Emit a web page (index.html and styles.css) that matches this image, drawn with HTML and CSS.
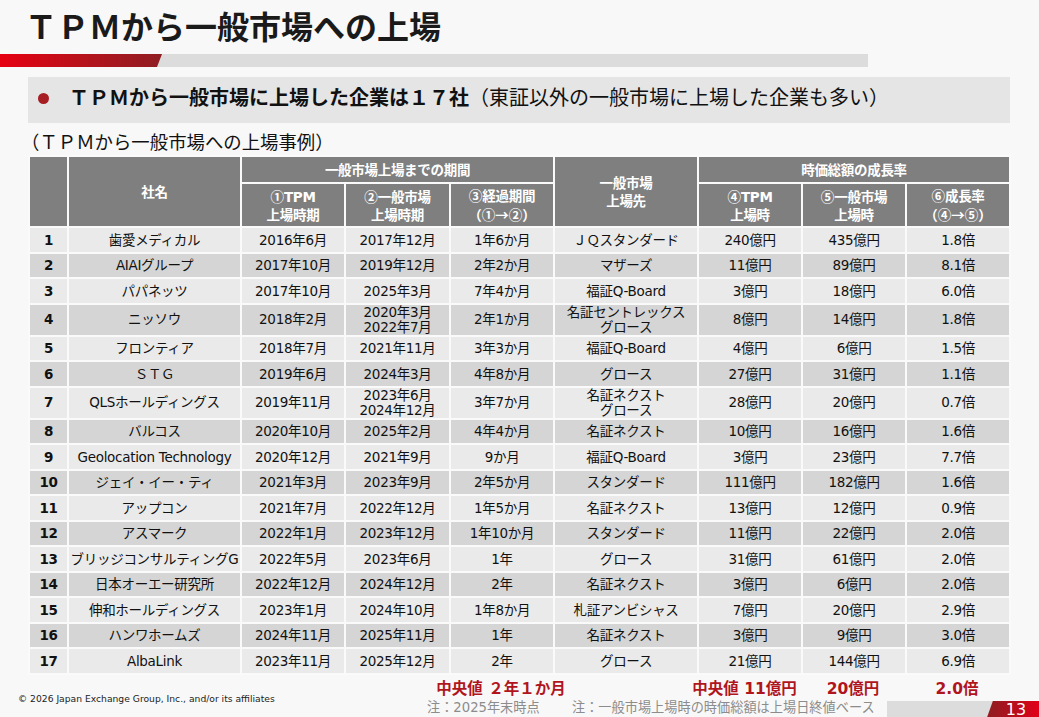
FILE: index.html
```html
<!DOCTYPE html>
<html lang="ja">
<head>
<meta charset="utf-8">
<title>ＴＰＭから一般市場への上場</title>
<link rel="stylesheet" href="styles.css">
</head>
<body>
<div class="slide">
  <h1 class="title">ＴＰＭから一般市場への上場</h1>
  <div class="rule"><div class="rule-red"></div></div>
  <div class="lead"><span class="dot"></span><span class="lead-bold">ＴＰＭから一般市場に上場した企業は１７社</span><span class="lead-normal">（東証以外の一般市場に上場した企業も多い）</span></div>
  <div class="caption">（ＴＰＭから一般市場への上場事例）</div>
  <table class="tbl">
    <colgroup>
      <col class="c-no"><col class="c-name"><col class="c-d"><col class="c-d2"><col class="c-d"><col class="c-mkt"><col class="c-d"><col class="c-d"><col class="c-d">
    </colgroup>
    <thead>
      <tr class="h1"><th rowspan="2"></th><th rowspan="2">社名</th><th colspan="3">一般市場上場までの期間</th><th rowspan="2">一般市場<br>上場先</th><th colspan="3">時価総額の成長率</th></tr>
      <tr class="h2"><th><span class="cj">①</span>TPM<br>上場時期</th><th><span class="cj">②</span>一般市場<br>上場時期</th><th><span class="cj">③</span>経過期間<br><span class="cj">（①→②）</span></th><th><span class="cj">④</span>TPM<br>上場時</th><th><span class="cj">⑤</span>一般市場<br>上場時</th><th><span class="cj">⑥</span>成長率<br><span class="cj">（④→⑤）</span></th></tr>
    </thead>
    <tbody>
      <tr><td class="no">1</td><td>歯愛メディカル</td><td>2016年6月</td><td>2017年12月</td><td>1年6か月</td><td>ＪＱスタンダード</td><td>240億円</td><td>435億円</td><td>1.8倍</td></tr>
      <tr><td class="no">2</td><td>AIAIグループ</td><td>2017年10月</td><td>2019年12月</td><td>2年2か月</td><td>マザーズ</td><td>11億円</td><td>89億円</td><td>8.1倍</td></tr>
      <tr><td class="no">3</td><td>パパネッツ</td><td>2017年10月</td><td>2025年3月</td><td>7年4か月</td><td>福証Q-Board</td><td>3億円</td><td>18億円</td><td>6.0倍</td></tr>
      <tr class="tall"><td class="no">4</td><td>ニッソウ</td><td>2018年2月</td><td>2020年3月<br>2022年7月</td><td>2年1か月</td><td>名証セントレックス<br>グロース</td><td>8億円</td><td>14億円</td><td>1.8倍</td></tr>
      <tr><td class="no">5</td><td>フロンティア</td><td>2018年7月</td><td>2021年11月</td><td>3年3か月</td><td>福証Q-Board</td><td>4億円</td><td>6億円</td><td>1.5倍</td></tr>
      <tr><td class="no">6</td><td>ＳＴＧ</td><td>2019年6月</td><td>2024年3月</td><td>4年8か月</td><td>グロース</td><td>27億円</td><td>31億円</td><td>1.1倍</td></tr>
      <tr class="tall"><td class="no">7</td><td>QLSホールディングス</td><td>2019年11月</td><td>2023年6月<br>2024年12月</td><td>3年7か月</td><td>名証ネクスト<br>グロース</td><td>28億円</td><td>20億円</td><td>0.7倍</td></tr>
      <tr><td class="no">8</td><td>バルコス</td><td>2020年10月</td><td>2025年2月</td><td>4年4か月</td><td>名証ネクスト</td><td>10億円</td><td>16億円</td><td>1.6倍</td></tr>
      <tr><td class="no">9</td><td>Geolocation Technology</td><td>2020年12月</td><td>2021年9月</td><td>9か月</td><td>福証Q-Board</td><td>3億円</td><td>23億円</td><td>7.7倍</td></tr>
      <tr><td class="no">10</td><td>ジェイ・イー・ティ</td><td>2021年3月</td><td>2023年9月</td><td>2年5か月</td><td>スタンダード</td><td>111億円</td><td>182億円</td><td>1.6倍</td></tr>
      <tr><td class="no">11</td><td>アップコン</td><td>2021年7月</td><td>2022年12月</td><td>1年5か月</td><td>名証ネクスト</td><td>13億円</td><td>12億円</td><td>0.9倍</td></tr>
      <tr><td class="no">12</td><td>アスマーク</td><td>2022年1月</td><td>2023年12月</td><td>1年10か月</td><td>スタンダード</td><td>11億円</td><td>22億円</td><td>2.0倍</td></tr>
      <tr><td class="no">13</td><td>ブリッジコンサルティングG</td><td>2022年5月</td><td>2023年6月</td><td>1年</td><td>グロース</td><td>31億円</td><td>61億円</td><td>2.0倍</td></tr>
      <tr><td class="no">14</td><td>日本オーエー研究所</td><td>2022年12月</td><td>2024年12月</td><td>2年</td><td>名証ネクスト</td><td>3億円</td><td>6億円</td><td>2.0倍</td></tr>
      <tr><td class="no">15</td><td>伸和ホールディングス</td><td>2023年1月</td><td>2024年10月</td><td>1年8か月</td><td>札証アンビシャス</td><td>7億円</td><td>20億円</td><td>2.9倍</td></tr>
      <tr><td class="no">16</td><td>ハンワホームズ</td><td>2024年11月</td><td>2025年11月</td><td>1年</td><td>名証ネクスト</td><td>3億円</td><td>9億円</td><td>3.0倍</td></tr>
      <tr><td class="no">17</td><td>AlbaLink</td><td>2023年11月</td><td>2025年12月</td><td>2年</td><td>グロース</td><td>21億円</td><td>144億円</td><td>6.9倍</td></tr>
    </tbody>
  </table>
  <div class="foot">
    <div class="copy">© 2026 Japan Exchange Group, Inc., and/or its affiliates</div>
    <div class="sum">
      <span class="s-period">中央値 ２年１か月</span>
      <span class="s-tpm">中央値 11億円</span>
      <span class="s-mkt">20億円</span>
      <span class="s-rate">2.0倍</span>
    </div>
    <div class="note note1">注：2025年末時点</div>
    <div class="note note2">注：一般市場上場時の時価総額は上場日終値ベース</div>
    <div class="pager"><div class="pager-slant"></div><div class="pager-num">13</div></div>
  </div>
</div>
</body>
</html>
```

FILE: styles.css
```css
html, body {
  margin: 0;
  padding: 0;
}
body {
  width: 1039px;
  height: 717px;
  overflow: hidden;
  background: #f8f8f8;
  color: #111;
  font-family: "DejaVu Sans", "Noto Sans CJK JP", sans-serif;
}
.slide {
  display: flex;
  flex-direction: column;
  height: 717px;
}
.cj {
  font-family: "Noto Sans CJK JP", sans-serif;
  letter-spacing: 0;
}
.title {
  margin: 0 0 10px 25px;
  padding-top: 6px;
  height: 38px;
  font-family: "Noto Sans CJK JP", sans-serif;
  font-size: 32px;
  line-height: 38px;
  font-weight: 700;
  color: #1a1a1a;
}
.rule {
  flex: none;
  width: 868px;
  height: 13px;
  background: #dcdcdc;
}
.rule-red {
  width: 162px;
  height: 100%;
  background: linear-gradient(90deg, #e60012 0%, #b3141c 55%, #8f1d23 100%);
  clip-path: polygon(0 0, 100% 0, calc(100% - 5px) 100%, 0 100%);
}
.lead {
  flex: none;
  margin: 10px 0 0 28px;
  width: 982px;
  height: 46px;
  box-sizing: border-box;
  padding: 0 0 6px 10px;
  background: #e5e5e5;
  display: flex;
  align-items: center;
  font-family: "Noto Sans CJK JP", sans-serif;
  font-size: 20px;
  line-height: 26px;
  color: #111;
  white-space: nowrap;
}
.dot {
  flex: none;
  width: 11px;
  height: 11px;
  border-radius: 50%;
  background: #a61d23;
  margin: 2px 20px 0 0;
}
.lead-bold {
  font-weight: 700;
}
.lead-normal {
  font-weight: 400;
}
.caption {
  flex: none;
  margin: 6px 0 0 21px;
  height: 24px;
  font-family: "Noto Sans CJK JP", sans-serif;
  font-size: 18.4px;
  line-height: 24px;
  color: #111;
}
.tbl {
  flex: none;
  margin: 2px 0 0 28px;
  width: 981px;
  table-layout: fixed;
  border-collapse: collapse;
  font-size: 13.5px;
  letter-spacing: -0.3px;
}
.c-no { width: 39px; }
.c-name { width: 173px; }
.c-d { width: 104px; }
.c-d2 { width: 105px; }
.c-mkt { width: 144px; }
.tbl th,
.tbl td {
  border: 2px solid #fafafa;
  padding: 0;
  text-align: center;
  vertical-align: middle;
  white-space: nowrap;
}
.tbl th {
  background: #7f7f7f;
  color: #fff;
  font-weight: 700;
  line-height: 18px;
}
.tbl tr.h1 { height: 27px; }
.tbl tr.h2 { height: 44px; }
.tbl tbody tr { height: 25.5px; }
.tbl tbody tr.tall { height: 32px; }
.tbl td {
  line-height: 16px;
  color: #111;
}
.tbl tr.tall td {
  line-height: 15px;
}
.tbl tbody tr:nth-child(odd) td { background: #eaeaea; }
.tbl tbody tr:nth-child(even) td { background: #d5d5d5; }
.tbl td.no {
  font-weight: 700;
}
.foot {
  flex: none;
  margin-top: 4px;
  display: grid;
  grid-template-columns: 427px 145px 315px 152px;
  grid-template-rows: 20px 19px;
}
.copy {
  grid-column: 1;
  grid-row: 1 / 3;
  align-self: center;
  padding-left: 18px;
  font-size: 9.2px;
  color: #222;
  white-space: nowrap;
}
.sum {
  grid-column: 2 / 5;
  grid-row: 1;
  display: grid;
  grid-template-columns: 22px 104px 144px 104px 104px 104px 30px;
  align-items: center;
  color: #b0151d;
  font-weight: 700;
  font-size: 15.5px;
  line-height: 20px;
}
.sum span {
  display: flex;
  justify-content: center;
  white-space: nowrap;
}
.s-period { grid-column: 2; }
.s-tpm { grid-column: 4; padding-right: 9px; }
.s-mkt { grid-column: 5; }
.s-rate { grid-column: 6; }
.note {
  grid-row: 2;
  align-self: start;
  font-size: 13.2px;
  line-height: 17px;
  color: #8c8c8c;
  white-space: nowrap;
}
.note1 { grid-column: 2; }
.note2 { grid-column: 3; }
.pager {
  grid-column: 4;
  grid-row: 2;
  align-self: end;
  height: 17px;
  background: #dcdcdc;
  display: flex;
  justify-content: flex-end;
}
.pager-slant {
  flex: none;
  width: 6px;
  height: 100%;
  background: #951b21;
  clip-path: polygon(100% 0, 100% 100%, 0 100%);
}
.pager-num {
  flex: none;
  width: 46px;
  height: 100%;
  background: linear-gradient(90deg, #951b21 0%, #c10a1c 60%, #e2001a 100%);
  color: #fff;
  font-size: 16px;
  line-height: 17px;
  text-align: center;
}
```
